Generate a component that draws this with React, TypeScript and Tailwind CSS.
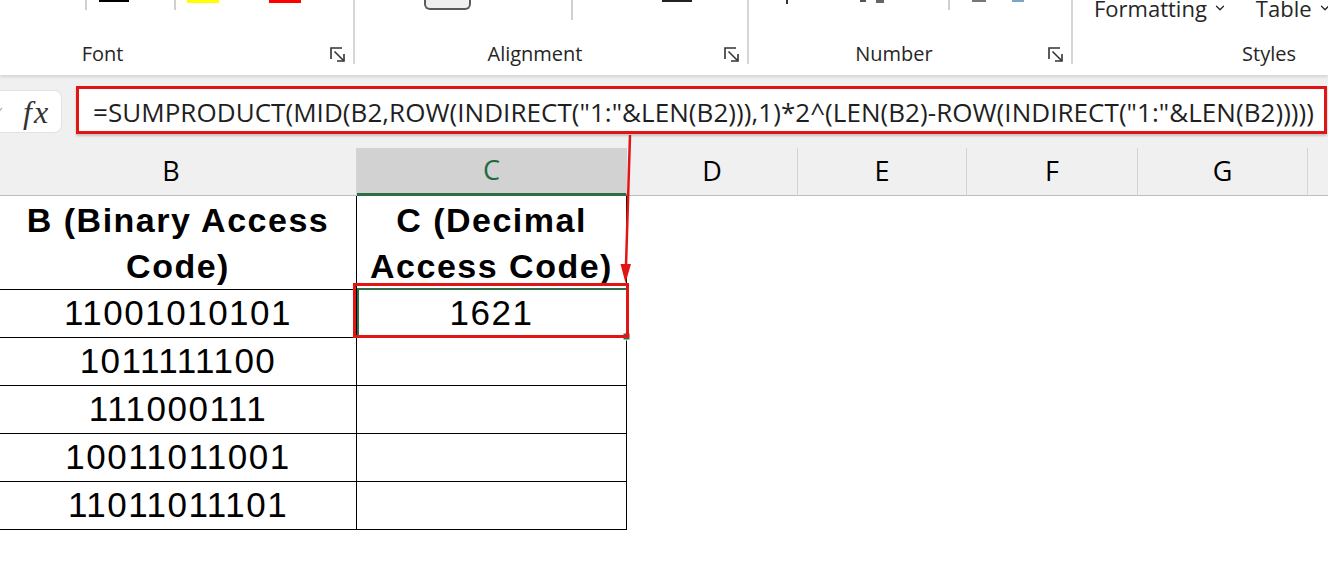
import { ChevronDown } from 'lucide-react'

const ui = "font-['Open_Sans','Noto_Sans',sans-serif]"
const cell = "font-['Liberation_Sans',Arial,sans-serif]"

function Launcher() {
  return (
    <svg width="16" height="16" viewBox="0 0 16 16" fill="none" stroke="#333" strokeWidth="1.6">
      <path d="M1 12 V1 H12" />
      <path d="M4.5 4.5 L13.5 13.5" />
      <path d="M14 7 V14 H7" />
    </svg>
  )
}

function Group({
  label,
  className,
  top,
  launcher = true,
}: {
  label: string
  className: string
  top: React.ReactNode
  launcher?: boolean
}) {
  return (
    <div className={`flex h-[64px] shrink-0 flex-col border-r-2 border-[#d6d6d6] ${className}`}>
      <div className="flex h-[41px] items-start">{top}</div>
      <div className="flex h-[23px] items-start">
        <span
          className={`flex-1 text-center text-[20px] leading-[26px] text-[#262626] ${launcher ? 'pr-[9px]' : 'pr-[32px]'}`}
        >
          {label}
        </span>
        {launcher && (
          <span className="mr-[7px] mt-[6px]">
            <Launcher />
          </span>
        )}
      </div>
    </div>
  )
}

const sep = 'h-[10px] w-[2px] bg-[#d0d0d0]'

const columns = [
  { key: 'B', w: 'w-[371px]' },
  { key: 'C', w: 'w-[270px]', active: true },
  { key: 'D', w: 'w-[171px]' },
  { key: 'E', w: 'w-[169px]' },
  { key: 'F', w: 'w-[171px]' },
  { key: 'G', w: 'w-[170px]' },
  { key: '', w: 'w-[60px]' },
]

const values = ['11001010101', '1011111100', '111000111', '10011011001', '11011011101']
const results = ['1621', '', '', '', '']

const formula =
  '=SUMPRODUCT(MID(B2,ROW(INDIRECT("1:"&LEN(B2))),1)*2^(LEN(B2)-ROW(INDIRECT("1:"&LEN(B2)))))'

export default function App() {
  return (
    <div className={`relative h-[577px] w-[1328px] overflow-hidden bg-white ${ui}`}>
      {/* Ribbon (top cut off) */}
      <div className="relative z-10 h-[75px] overflow-hidden bg-white shadow-[0_2px_3px_rgba(0,0,0,0.12)]">
        <div className="-ml-[116px] flex">
          <Group
            label="Font"
            className="w-[471px]"
            top={
              <>
                <div className={`ml-[201px] ${sep}`} />
                <div className="ml-[12px] h-[2px] w-[30px] bg-black" />
                <div className={`ml-[45px] ${sep}`} />
                <div className="ml-[11px] h-[3px] w-[32px] bg-[#ffff00]" />
                <div className="ml-[50px] h-[3px] w-[32px] bg-[#ff0000]" />
              </>
            }
          />
          <Group
            label="Alignment"
            className="w-[394px]"
            top={
              <>
                <div className="ml-[69px] h-[10px] w-[47px] rounded-b-[6px] border-x-2 border-b-2 border-[#5a5a5a] bg-[#efefef]" />
                <div className="ml-[100px] h-[20px] w-[2px] bg-[#d0d0d0]" />
                <div className="ml-[89px] h-[2px] w-[30px] bg-[#222]" />
              </>
            }
          />
          <Group
            label="Number"
            className="w-[324px]"
            top={
              <>
                <div className="ml-[37px] h-[4px] w-[2px] bg-[#333]" />
                <div className="ml-[72px] h-[2px] w-[6px] bg-[#555]" />
                <div className="ml-[10px] h-[3px] w-[8px] bg-[#666]" />
                <div className={`ml-[64px] ${sep}`} />
                <div className="ml-[22px] h-[2px] w-[14px] bg-[#777]" />
                <div className="ml-[26px] h-[2px] w-[12px] bg-[#7aa7c7]" />
              </>
            }
          />
          <Group
            label="Styles"
            className="w-[426px] border-r-0"
            launcher={false}
            top={
              <>
                <div className="-mt-[3px] ml-[21px] flex items-center gap-[6px] text-[22px] leading-[22px] text-[#262626]">
                  Formatting
                  <ChevronDown size={14} strokeWidth={2.2} />
                </div>
                <div className="-mt-[3px] ml-[29px] flex items-center gap-[6px] text-[22px] leading-[22px] text-[#262626]">
                  Table
                  <ChevronDown size={14} strokeWidth={2.2} />
                </div>
              </>
            }
          />
        </div>
      </div>

      {/* Formula bar */}
      <div className="flex h-[73px] items-start bg-[#f0f0f0]">
        <div className="-ml-[10px] mt-[15px] flex h-[43px] w-[72px] items-center rounded-lg border border-[#e2e2e2] bg-white">
          <svg width="18" height="12" viewBox="0 0 18 12" className="-ml-[3px]">
            <path d="M2 7 L6 11 L14 2" stroke="#b5b5b5" strokeWidth="1.4" fill="none" />
          </svg>
          <span className="ml-[17px] font-['Liberation_Serif',serif] text-[32px] italic leading-none text-[#333]">
            f<span className="ml-[2px]">x</span>
          </span>
        </div>
        <div className="ml-[14px] mt-[11px] flex h-[48px] w-[1251px] items-center border-[3px] border-[#e31414] bg-white pl-[14px] pt-[3px] shadow-[0_2px_2px_rgba(0,0,0,0.18)]">
          <span className="whitespace-nowrap text-[26px] leading-[30px] tracking-[0.05px] text-[#1f1f1f]">{formula}</span>
        </div>
      </div>

      {/* Column headers */}
      <div className="-ml-[14px] flex h-[48px] bg-[#f0f0f0]">
        {columns.map((c, i) => (
          <div
            key={i}
            className={`flex shrink-0 items-center justify-center border-r border-[#d4d4d4] text-[27px] ${c.w} ${
              c.active
                ? 'border-b-[3px] border-b-[#2d6e48] bg-[#d2d2d2] text-[#1f6b40]'
                : 'border-b border-b-[#bdbdbd] text-black'
            }`}
          >
            {c.key}
          </div>
        ))}
      </div>

      {/* Table */}
      <div className={`-ml-[14px] flex flex-col ${cell} text-black`}>
        <div className="flex h-[94px]">
          <div className="flex w-[371px] shrink-0 flex-col items-center justify-center border-r border-b border-black pl-[14px] text-[34px] font-bold leading-[46px] tracking-[1.5px]">
            <span>B (Binary Access</span>
            <span>Code)</span>
          </div>
          <div className="flex w-[270px] shrink-0 flex-col items-center justify-center border-r border-b border-black text-[34px] font-bold leading-[46px] tracking-[1.5px]">
            <span>C (Decimal</span>
            <span>Access Code)</span>
          </div>
        </div>
        {values.map((v, i) => (
          <div key={v} className="flex h-[48px]">
            <div className="flex w-[371px] shrink-0 items-center justify-center border-r border-b border-black pl-[14px] text-[35px] tracking-[1.5px]">
              {v}
            </div>
            <div className="flex w-[270px] shrink-0 items-center justify-center border-r border-b border-black text-[35px] tracking-[1.5px]">
              {results[i]}
            </div>
          </div>
        ))}
      </div>

      {/* Annotation overlay */}
      <svg className="pointer-events-none absolute inset-0" width="1328" height="577">
        <rect x="358" y="289" width="269" height="48" fill="none" stroke="#2f6b47" strokeWidth="2" />
        <rect x="623" y="333" width="7" height="7" fill="#3c6a4c" stroke="#fff" strokeWidth="1" />
        <line x1="630" y1="135" x2="626" y2="266" stroke="#e31414" strokeWidth="2.5" />
        <polygon points="620.5,264 631,264 625.5,283" fill="#e31414" />
        <rect x="354.5" y="284.5" width="273" height="52" fill="none" stroke="#e31414" strokeWidth="3" />
      </svg>
    </div>
  )
}
